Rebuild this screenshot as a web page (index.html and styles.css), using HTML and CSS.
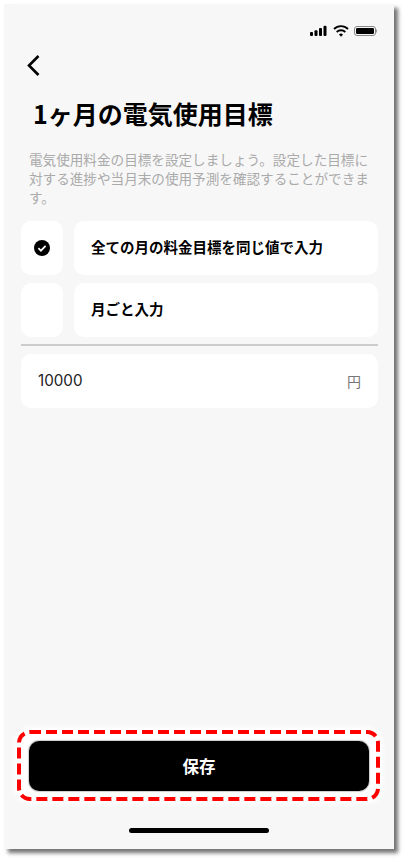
FILE: index.html
```html
<!DOCTYPE html>
<html lang="ja">
<head>
<meta charset="utf-8">
<title>1ヶ月の電気使用目標</title>
<link rel="stylesheet" href="styles.css">
</head>
<body>
<main class="phone">
  <div class="status">
    <svg class="status-icons" width="68" height="13" viewBox="0 0 68 13">
      <g fill="#000">
        <rect x="0" y="7" width="3" height="4" rx="1"/>
        <rect x="4.5" y="5.2" width="3" height="5.8" rx="1"/>
        <rect x="9" y="3" width="3" height="8" rx="1"/>
        <rect x="13.5" y="0.8" width="3" height="10.2" rx="1"/>
        <path d="M29 9.5l2 2.3 2-2.3a3 3 0 0 0-4 0z"/>
      </g>
      <g fill="none" stroke="#000" stroke-width="1.8">
        <path d="M26.7 7a6.2 6.2 0 0 1 8.6 0"/>
        <path d="M24 4a10 10 0 0 1 14 0"/>
      </g>
      <rect x="44.5" y="1.5" width="21" height="9" rx="2.5" fill="none" stroke="#888" stroke-width="1"/>
      <rect x="46" y="3" width="18" height="6" rx="1.3" fill="#000"/>
      <rect x="66.2" y="4.5" width="0.8" height="3" fill="#888"/>
    </svg>
  </div>
  <div class="back">
    <svg width="15" height="23" viewBox="0 0 15 23"><path d="M12.5 2 L3 11.5 L12.5 21" fill="none" stroke="#000" stroke-width="2.6"/></svg>
  </div>
  <h1 class="title">1ヶ月の電気使用目標</h1>
  <p class="desc">電気使用料金の目標を設定しましょう。設定した目標に対する進捗や当月末の使用予測を確認することができます。</p>
  <div class="options">
    <div class="option">
      <div class="check">
        <svg width="16" height="16" viewBox="0 0 16 16"><circle cx="8" cy="8" r="8" fill="#000"/><path d="M4.4 8.2l2.5 2.5 4.7-4.8" fill="none" stroke="#fff" stroke-width="1.7"/></svg>
      </div>
      <div class="label">全ての月の料金目標を同じ値で入力</div>
    </div>
    <div class="option">
      <div class="check"></div>
      <div class="label">月ごと入力</div>
    </div>
  </div>
  <hr class="rule">
  <div class="field">
    <span class="value">10000</span>
    <span class="unit">円</span>
  </div>
  <div class="spacer"></div>
  <div class="highlight">
    <button class="save" type="button">保存</button>
    <svg class="dashes" width="363" height="71" viewBox="0 0 363 71"><rect x="2" y="2" width="359" height="67" rx="11" fill="none" stroke="#f00" stroke-width="4" stroke-dasharray="11 5"/></svg>
  </div>
  <div class="home"></div>
</main>
</body>
</html>
```
FILE: styles.css
```css
* { box-sizing: border-box; }
html, body { margin: 0; padding: 0; background: #fff; }
body {
  width: 407px;
  height: 862px;
  overflow: hidden;
  font-family: "Noto Sans CJK JP", "Noto Sans", sans-serif;
  color: #000;
  padding: 4px 0 0 4px;
}
.phone {
  width: 390px;
  height: 845px;
  background: #f7f7f7;
  box-shadow: 4px 4px 4px rgba(0, 0, 0, 0.55);
  display: flex;
  flex-direction: column;
}
.status {
  height: 48px;
  padding: 21px 0 0 306px;
  flex: none;
}
.status-icons { display: block; }
.back {
  height: 27px;
  padding-left: 22px;
  flex: none;
}
.back svg { display: block; margin-top: 2px; }
.title {
  margin: 18px 0 0 29px;
  font-size: 25px;
  line-height: 32px;
  font-weight: 700;
}
.desc {
  margin: 21px 0 0 25px;
  width: 344px;
  font-size: 13.6px;
  line-height: 19px;
  color: #aaa;
}
.options {
  margin: 14px 16px 0 17px;
  display: flex;
  flex-direction: column;
  gap: 8.5px;
}
.option { display: flex; gap: 11px; height: 53.5px; }
.check {
  width: 42px;
  background: #fff;
  border-radius: 10px;
  display: flex;
  align-items: center;
  justify-content: center;
  flex: none;
}
.label {
  flex: 1;
  background: #fff;
  border-radius: 10px;
  padding: 0 0 3px 17px;
  display: flex;
  align-items: center;
  font-size: 14.5px;
  font-weight: 700;
}
.rule {
  margin: 7.5px 16px 0 17px;
  border: 0;
  height: 1.5px;
  background: #cdcdcd;
  flex: none;
}
.field {
  margin: 8px 16px 0 17px;
  height: 54px;
  background: #fff;
  border-radius: 10px;
  padding: 0 17px 0;
  display: flex;
  align-items: center;
  justify-content: space-between;
  flex: none;
}
.value { font-family: "Inter", sans-serif; font-size: 15.2px; color: #222; }
.unit { font-size: 14px; color: #777; }
.spacer { flex: 1; }
.highlight {
  position: relative;
  margin-left: 13px;
  width: 363px;
  height: 71px;
  background: #fff;
  border-radius: 13px;
  box-shadow: 0 0 4px 3px rgba(255, 255, 255, 0.9);
  padding: 11px 11px 10px 12px;
  flex: none;
}
.dashes { position: absolute; left: 0; top: 0; display: block; }
.save {
  display: block;
  width: 100%;
  height: 50px;
  background: #000;
  color: #fff;
  border: 0;
  border-radius: 10px;
  box-shadow: 0 0 1px 1px rgba(0, 0, 0, 0.2);
  font-family: inherit;
  font-size: 16.5px;
  font-weight: 700;
  padding: 0 0 1px;
}
.home {
  width: 140px;
  height: 5px;
  margin: 27px 0 16px 125px;
  background: #000;
  border-radius: 3px;
  flex: none;
}
```
